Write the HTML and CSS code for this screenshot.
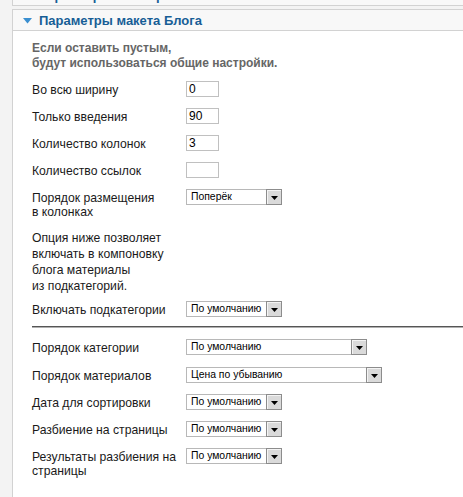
FILE: index.html
```html
<!DOCTYPE html>
<html lang="ru">
<head>
<meta charset="utf-8">
<title>Параметры макета Блога</title>
<link rel="stylesheet" href="styles.css">
</head>
<body>
<div class="page">
  <div class="panel panel-collapsed">
    <div class="pane-head"><span class="pane-title">Параметры категории</span></div>
  </div>
  <div class="panel">
    <div class="pane-head open">
      <svg class="arrow" width="9" height="6" viewBox="0 0 9 6"><polygon points="0,0 9,0 4.5,5.5" fill="#3a8fd0"/></svg>
      <span class="pane-title">Параметры макета Блога</span>
    </div>
    <div class="pane-body">
      <p class="intro">Если оставить пустым,<br>будут использоваться общие настройки.</p>

      <div class="row r-first">
        <span class="key">Во всю ширину</span>
        <span class="inp">0</span>
      </div>
      <div class="row">
        <span class="key">Только введения</span>
        <span class="inp">90</span>
      </div>
      <div class="row">
        <span class="key">Количество колонок</span>
        <span class="inp">3</span>
      </div>
      <div class="row">
        <span class="key">Количество ссылок</span>
        <span class="inp"></span>
      </div>
      <div class="row">
        <span class="key">Порядок размещения<br>в колонках</span>
        <span class="sel w96"><span class="sel-text">Поперёк</span><span class="sel-btn"><svg width="7" height="4" viewBox="0 0 7 4"><polygon points="0,0 7,0 3.5,4" fill="#000"/></svg></span></span>
      </div>
      <p class="note">Опция ниже позволяет<br>включать в компоновку<br>блога материалы<br>из подкатегорий.</p>
      <div class="row r-after-note">
        <span class="key">Включать подкатегории</span>
        <span class="sel w96"><span class="sel-text">По умолчанию</span><span class="sel-btn"><svg width="7" height="4" viewBox="0 0 7 4"><polygon points="0,0 7,0 3.5,4" fill="#000"/></svg></span></span>
      </div>

      <hr class="sep">

      <div class="row">
        <span class="key">Порядок категории</span>
        <span class="sel w181"><span class="sel-text">По умолчанию</span><span class="sel-btn"><svg width="7" height="4" viewBox="0 0 7 4"><polygon points="0,0 7,0 3.5,4" fill="#000"/></svg></span></span>
      </div>
      <div class="row r28">
        <span class="key">Порядок материалов</span>
        <span class="sel w196"><span class="sel-text">Цена по убыванию</span><span class="sel-btn"><svg width="7" height="4" viewBox="0 0 7 4"><polygon points="0,0 7,0 3.5,4" fill="#000"/></svg></span></span>
      </div>
      <div class="row">
        <span class="key">Дата для сортировки</span>
        <span class="sel w96"><span class="sel-text">По умолчанию</span><span class="sel-btn"><svg width="7" height="4" viewBox="0 0 7 4"><polygon points="0,0 7,0 3.5,4" fill="#000"/></svg></span></span>
      </div>
      <div class="row">
        <span class="key">Разбиение на страницы</span>
        <span class="sel w96"><span class="sel-text">По умолчанию</span><span class="sel-btn"><svg width="7" height="4" viewBox="0 0 7 4"><polygon points="0,0 7,0 3.5,4" fill="#000"/></svg></span></span>
      </div>
      <div class="row">
        <span class="key">Результаты разбиения на<br>страницы</span>
        <span class="sel w96"><span class="sel-text">По умолчанию</span><span class="sel-btn"><svg width="7" height="4" viewBox="0 0 7 4"><polygon points="0,0 7,0 3.5,4" fill="#000"/></svg></span></span>
      </div>
    </div>
  </div>
</div>
</body>
</html>
```

FILE: styles.css
```css
html, body {
  margin: 0;
  padding: 0;
  background: #f3f3f3;
  font-family: "Liberation Sans", Arial, sans-serif;
}

.page {
  padding-left: 12px;
  height: 497px;
  overflow: hidden;
}

.panel {
  border: 1px solid #d2d2d2;
  background: #fff;
  margin-right: -10px;
}

.panel-collapsed {
  margin-top: -16px;
  margin-bottom: 3px;
}

.pane-head {
  height: 20px;
  background: #f8f8f8;
  display: flex;
  align-items: center;
  padding-left: 25px;
}

.pane-head.open {
  border-bottom: 1px solid #d2d2d2;
  padding-left: 10px;
}

.arrow {
  margin-right: 7px;
  margin-top: 1px;
}

.pane-title {
  font-size: 13px;
  font-weight: bold;
  color: #175e96;
  line-height: 20px;
  padding-top: 2px;
}

.pane-body {
  padding-left: 19px;
  padding-top: 10px;
  height: 600px;
}

.intro {
  margin: 0;
  font-size: 12px;
  font-weight: bold;
  color: #666;
  line-height: 15px;
}

.row {
  display: flex;
  align-items: flex-start;
  margin-top: 11px;
}

.row.r-first { margin-top: 10px; }
.row.r28 { margin-top: 12px; }
.row.r-after-note { margin-top: 7px; }

.key {
  width: 154px;
  flex: none;
  font-size: 12.2px;
  line-height: 14px;
  color: #1a1a1a;
  padding-top: 2px;
}

.note {
  margin: 11px 0 0 0;
  font-size: 12.2px;
  line-height: 16px;
  color: #1a1a1a;
}

.inp {
  box-sizing: border-box;
  width: 33px;
  height: 16px;
  border: 1px solid #c0c0c0;
  background: #fff;
  font-size: 12px;
  line-height: 14px;
  padding-left: 2px;
  color: #000;
}

.sel {
  box-sizing: border-box;
  display: flex;
  height: 16px;
  border: 1px solid #b8b8b8;
  background: #fff;
  font-size: 10.4px;
  color: #000;
}

.w96 { width: 96px; }
.w181 { width: 181px; }
.w196 { width: 196px; }

.sel-text {
  flex: 1;
  padding-left: 4px;
  line-height: 14px;
  white-space: nowrap;
  overflow: hidden;
}

.sel-btn {
  box-sizing: border-box;
  width: 16px;
  height: 16px;
  margin: -1px -1px -1px 0;
  border: 1px solid #8c8c8c;
  background: #dadada;
  box-shadow: inset 1px 1px 0 #f4f4f4;
  display: flex;
  align-items: center;
  justify-content: center;
}

.sel-btn svg {
  display: block;
  margin-top: 1px;
}

.sep {
  margin: 9px 0 11px 0;
  height: 0;
  border: 0;
  border-top: 1px solid #555;
  border-bottom: 1px solid #b0b0b0;
}

.sep + .row { margin-top: 0; }
```
